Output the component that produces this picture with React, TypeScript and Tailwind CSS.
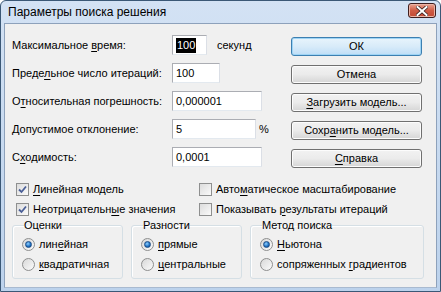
import React from "react";

const font = { fontFamily: '"Liberation Sans", Arial, sans-serif' };

function U({ children }: { children: React.ReactNode }) {
  return <span className="underline underline-offset-[2px] decoration-[1px]">{children}</span>;
}

function Label({ children }: { children: React.ReactNode }) {
  return <div className="w-[160px] shrink-0 text-[11px] text-black leading-none">{children}</div>;
}

function Input({ w, value, selected }: { w: string; value: string; selected?: boolean }) {
  return (
    <div
      className={`h-[20px] ${w} border border-[#abadb3] border-b-[#e3e9ef] border-r-[#dbdfe6] bg-white flex items-center pl-[3px] text-[11px] text-black`}
    >
      {selected ? <span className="bg-black text-white px-[1px] leading-[15px]">{value}</span> : value}
    </div>
  );
}

function Btn({ children, focus }: { children: React.ReactNode; focus?: boolean }) {
  return (
    <div
      className={`h-[19px] w-[131px] rounded-[3px] border flex items-center justify-center text-[11px] text-black ${
        focus
          ? "border-[#3c7fb1] bg-gradient-to-b from-[#e8f4fc] via-[#d8ebf9] to-[#bedef7] shadow-[inset_0_0_0_1px_#9ed4f5]"
          : "border-[#707070] bg-gradient-to-b from-[#f2f2f2] via-[#ebebeb] to-[#d5d5d5] shadow-[inset_0_0_0_1px_#fcfcfc]"
      }`}
    >
      {children}
    </div>
  );
}

function Check({ checked, children }: { checked?: boolean; children: React.ReactNode }) {
  return (
    <div className="flex items-center gap-[4px] text-[11px] text-black h-[20px]">
      <div className="w-[13px] h-[13px] border border-[#8e8f8f] bg-gradient-to-br from-[#dcdcdc] to-[#fafafa] flex items-center justify-center">
        {checked && (
          <svg width="9" height="9" viewBox="0 0 9 9">
            <path d="M1 4.5 L3.5 7 L8 1.5" fill="none" stroke="#4a5f97" strokeWidth="1.8" />
          </svg>
        )}
      </div>
      <span>{children}</span>
    </div>
  );
}

function Radio({ checked, children }: { checked?: boolean; children: React.ReactNode }) {
  return (
    <div className="flex items-center gap-[4px] text-[11px] text-black h-[20px]">
      <div className="w-[13px] h-[13px] rounded-full border border-[#8e8f8f] bg-gradient-to-br from-[#d8d8d8] to-[#fbfbfb] flex items-center justify-center">
        {checked && (
          <div className="w-[7px] h-[7px] rounded-full bg-[radial-gradient(circle_at_40%_35%,#8fd0ff,#1d6fc2_60%,#0d3f7a)] border border-[#1c4d87]" />
        )}
      </div>
      <span>{children}</span>
    </div>
  );
}

function Group({ title, w, children }: { title: string; w: string; children: React.ReactNode }) {
  return (
    <fieldset className={`${w} h-[60px] border border-[#d5dfe5] rounded-[3px] pl-[9px] shadow-[inset_1px_1px_0_#fff]`}>
      <legend className="ml-[2px] px-0 text-[11px] text-black leading-[13px]">{title}</legend>
      <div className="flex flex-col pt-[2px]">{children}</div>
    </fieldset>
  );
}

export default function App() {
  return (
    <div className="w-[441px] h-[292px] bg-white" style={font}>
      <div className="w-[441px] h-[292px] rounded-t-[6px] border border-[#3b5876] bg-gradient-to-b from-[#d3e2f4] to-[#bcd2ec] flex flex-col">
        {/* title bar */}
        <div className="h-[22px] flex items-center justify-between pl-[7px] pr-[4px] shrink-0">
          <span className="text-[12px] text-black">Параметры поиска решения</span>
          <div className="w-[28px] h-[15px] -mt-[3px] rounded-[3px] border border-[#3f1e1e] bg-gradient-to-b from-[#e8a493] via-[#cf5b44] to-[#c24a34] shadow-[inset_0_0_0_1px_#eab4a6] flex items-center justify-center">
            <svg width="12" height="10" viewBox="0 0 12 10">
              <path d="M1.5 1 L10.5 9 M10.5 1 L1.5 9" stroke="#3a2222" strokeWidth="3.6" strokeLinecap="square" />
              <path d="M1.5 1 L10.5 9 M10.5 1 L1.5 9" stroke="#ffffff" strokeWidth="2" strokeLinecap="square" />
            </svg>
          </div>
        </div>
        {/* client */}
        <div className="flex-1 mx-[3px] mb-[3px] bg-[#f0f0f0] border border-[#8da1bb] border-b-[#a9bad0] flex flex-col pl-[7px] pt-[7px]">
          <div className="flex">
            <div className="flex flex-col w-[279px]">
              <div className="flex items-center h-[28px]">
                <Label>
                  Максимальное <U>в</U>ремя:
                </Label>
                <Input w="w-[35px]" value="100" selected />
                <span className="ml-[10px] text-[11px]">секунд</span>
              </div>
              <div className="flex items-center h-[28px]">
                <Label>
                  Преде<U>л</U>ьное число итераций:
                </Label>
                <Input w="w-[48px]" value="100" />
              </div>
              <div className="flex items-center h-[28px]">
                <Label>
                  О<U>т</U>носительная погрешность:
                </Label>
                <Input w="w-[90px]" value="0,000001" />
              </div>
              <div className="flex items-center h-[28px]">
                <Label>
                  <U>Д</U>опустимое отклонение:
                </Label>
                <Input w="w-[84px]" value="5" />
                <span className="ml-[3px] text-[11px]">%</span>
              </div>
              <div className="flex items-center h-[28px]">
                <Label>
                  С<U>х</U>одимость:
                </Label>
                <Input w="w-[90px]" value="0,0001" />
              </div>
            </div>
            <div className="flex flex-col gap-[9px] pt-[6px]">
              <Btn focus>ОК</Btn>
              <Btn>Отмена</Btn>
              <Btn>
                <U>З</U>агрузить модель...
              </Btn>
              <Btn>
                Сохр<U>а</U>нить модель...
              </Btn>
              <Btn>
                <U>С</U>правка
              </Btn>
            </div>
          </div>
          <div className="flex mt-[8px] pl-[4px]">
            <div className="flex flex-col w-[183px]">
              <Check checked>
                <U>Л</U>инейная модель
              </Check>
              <Check checked>
                Неотрицательн<U>ы</U>е значения
              </Check>
            </div>
            <div className="flex flex-col">
              <Check>
                Авто<U>м</U>атическое масштабирование
              </Check>
              <Check>
                Показывать <U>р</U>езультаты итераций
              </Check>
            </div>
          </div>
          <div className="flex gap-[8px]">
            <Group title="Оценки" w="w-[111px]">
              <Radio checked>
                лин<U>е</U>йная
              </Radio>
              <Radio>
                <U>к</U>вадратичная
              </Radio>
            </Group>
            <Group title="Разности" w="w-[111px]">
              <Radio checked>
                <U>п</U>рямые
              </Radio>
              <Radio>
                <U>ц</U>ентральные
              </Radio>
            </Group>
            <Group title="Метод поиска" w="w-[174px]">
              <Radio checked>
                <U>Н</U>ьютона
              </Radio>
              <Radio>
                сопряженных <U>г</U>радиентов
              </Radio>
            </Group>
          </div>
        </div>
      </div>
    </div>
  );
}
